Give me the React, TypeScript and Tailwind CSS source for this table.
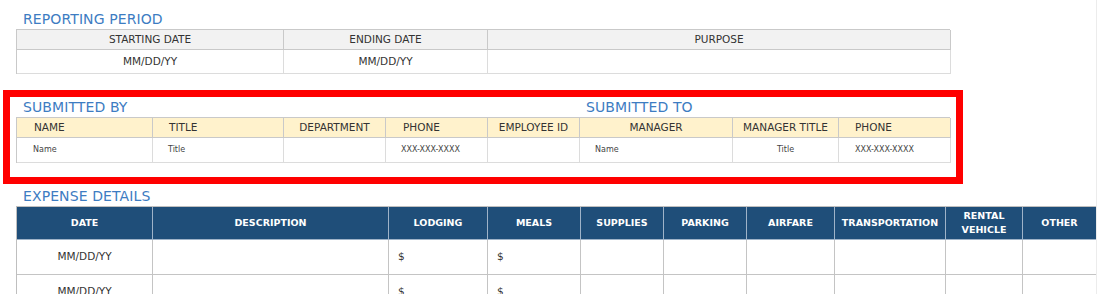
const titleCls = "text-[14px] leading-[17px] text-[#3d7cc2] tracking-[0.1px]";

const submitted = [
  { head: "NAME", body: "Name", align: "pl-[17px] text-left", bodyAlign: "pl-[16px] text-left" },
  { head: "TITLE", body: "Title", align: "pl-[16px] text-left", bodyAlign: "pl-[15px] text-left" },
  { head: "DEPARTMENT", body: "", align: "text-center", bodyAlign: "text-center" },
  { head: "PHONE", body: "XXX-XXX-XXXX", align: "pl-[17px] text-left", bodyAlign: "pl-[15px] text-left" },
  { head: "EMPLOYEE ID", body: "", align: "text-center", bodyAlign: "text-center" },
  { head: "MANAGER", body: "Name", align: "text-center", bodyAlign: "pl-[15px] text-left" },
  { head: "MANAGER TITLE", body: "Title", align: "text-center", bodyAlign: "text-center" },
  { head: "PHONE", body: "XXX-XXX-XXXX", align: "pl-[16px] text-left", bodyAlign: "pl-[16px] text-left" },
];

const expenseHeads = ["DATE", "DESCRIPTION", "LODGING", "MEALS", "SUPPLIES", "PARKING", "AIRFARE", "TRANSPORTATION", "RENTAL VEHICLE", "OTHER"];

const expenseRows = [
  ["MM/DD/YY", "", "$", "$", "", "", "", "", "", ""],
  ["MM/DD/YY", "", "$", "$", "", "", "", "", "", ""],
];

export default function App() {
  return (
    <div className="w-[1097px] h-[294px] overflow-hidden bg-white border-r border-[#ececec] font-['DejaVu_Sans',sans-serif] text-[#333]">
      {/* Reporting period */}
      <div className="pl-[23px] pt-[11px] h-[29px]">
        <div className={titleCls}>REPORTING PERIOD</div>
      </div>
      <div className="ml-[16px] w-[934px] grid grid-cols-[267px_204px_463px] border-l border-t border-[#c9c9c9] text-[10.5px]">
        <div className="h-[20px] flex items-center justify-center bg-[#f2f2f2] border-r border-b border-[#c9c9c9]">STARTING DATE</div>
        <div className="h-[20px] flex items-center justify-center bg-[#f2f2f2] border-r border-b border-[#c9c9c9]">ENDING DATE</div>
        <div className="h-[20px] flex items-center justify-center bg-[#f2f2f2] border-r border-b border-[#c9c9c9]">PURPOSE</div>
        <div className="h-[24px] flex items-center justify-center border-r border-b border-[#dcdcdc]">MM/DD/YY</div>
        <div className="h-[24px] flex items-center justify-center border-r border-b border-[#dcdcdc]">MM/DD/YY</div>
        <div className="h-[24px] border-r border-b border-[#dcdcdc]" />
      </div>

      {/* Submitted by / to */}
      <div className="mt-[16px] ml-[3px] w-[960px] h-[94px] border-[7px] border-[#ff0000] pl-[6px] pt-[2px]">
        <div className="flex h-[18px]">
          <div className={`${titleCls} pl-[7px] w-[570px]`}>SUBMITTED BY</div>
          <div className={titleCls}>SUBMITTED TO</div>
        </div>
        <div className="grid grid-cols-[136px_131px_102px_102px_92px_153px_106px_112px] w-[934px] border-l border-t border-[#c9c9c9]">
          {submitted.map((c, i) => (
            <div key={"h" + i} className={`h-[20px] leading-[19px] bg-[#fff2cc] border-r border-b border-[#c9c9c9] text-[10.5px] whitespace-nowrap ${c.align}`}>
              {c.head}
            </div>
          ))}
          {submitted.map((c, i) => (
            <div key={"b" + i} className={`h-[25px] leading-[24px] border-r border-b border-[#dcdcdc] text-[8px] text-[#444] whitespace-nowrap ${c.bodyAlign}`}>
              {c.body}
            </div>
          ))}
        </div>
      </div>

      {/* Expense details */}
      <div className="pl-[23px] pt-[4px] h-[22px]">
        <div className={titleCls}>EXPENSE DETAILS</div>
      </div>
      <div className="ml-[16px] grid grid-cols-[136px_236px_99px_93px_83px_83px_88px_111px_77px_74px] border-l border-t border-[#bfbfbf]">
        {expenseHeads.map((h) => (
          <div key={h} className="h-[33px] flex items-center justify-center text-center bg-[#1f4e79] border-r border-b border-[#9fb3c8] text-white font-bold text-[9.5px] leading-[14px] px-[2px] whitespace-nowrap">
            {h === "RENTAL VEHICLE" ? (
              <span>RENTAL<br />VEHICLE</span>
            ) : h}
          </div>
        ))}
        {expenseRows.map((r, ri) =>
          r.map((c, ci) => (
            <div
              key={ri + "-" + ci}
              className={`h-[35px] flex items-center border-r border-b border-[#c4c4c4] text-[10.5px] ${ci === 0 ? "justify-center" : "pl-[9px]"}`}
            >
              {c}
            </div>
          ))
        )}
      </div>
    </div>
  );
}
